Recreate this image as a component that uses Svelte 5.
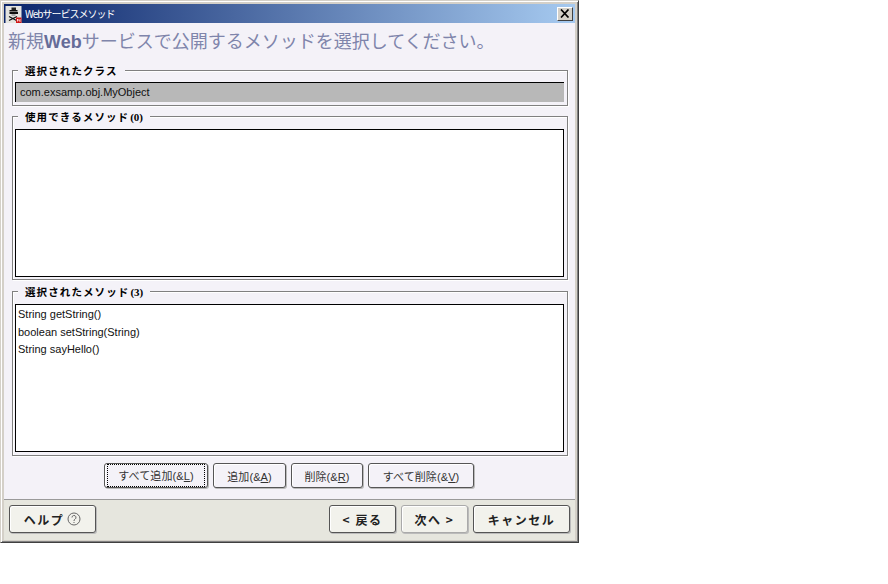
<script>
  const methods = ['String getString()', 'boolean setString(String)', 'String sayHello()'];
</script>

<div class="win">
  <div class="titlebar">
    <svg class="ico" width="17" height="17" viewBox="0 0 16 17">
      <rect width="16" height="17" fill="#e4e4e0"/>
      <path d="M4 4h8v1.500H4z" fill="#111"/><path d="M6 1.500h4.500V4H6z" fill="#222"/>
      <path d="M4 6h8.500v2H4z" fill="#111"/><path d="M6 8h4v2H6z" fill="#aaa"/>
      <path d="M3.500 10.500l7.500 4M11.500 10.500l-8 4" stroke="#111" stroke-width="1.300"/>
      <rect x="10.500" y="11.500" width="5.500" height="5.500" fill="#d01818"/>
      <path d="M12 13v2.500M14.500 13v2.500M12 13l2.500 2.500" stroke="#fff" stroke-width=".8" fill="none"/>
    </svg>
    <span class="wintitle">Webサービスメソッド</span>
    <span class="close"><svg width="10" height="9" viewBox="0 0 10 9"><path d="M1 0.500l7.500 8M8.500 0.500l-7.500 8" stroke="#000" stroke-width="1.700"/></svg></span>
  </div>

  <div class="content">
    <h1>新規<b>Web</b>サービスで公開するメソッドを選択してください。</h1>

    <fieldset class="g1">
      <legend>選択されたクラス</legend>
      <div class="cls">com.exsamp.obj.MyObject</div>
    </fieldset>

    <fieldset class="g2">
      <legend>使用できるメソッド<span class="n">(0)</span></legend>
      <div class="list"></div>
    </fieldset>

    <fieldset class="g3">
      <legend>選択されたメソッド<span class="n">(3)</span></legend>
      <div class="list">
        {#each methods as m}<div class="item">{m}</div>{/each}
      </div>
    </fieldset>

    <div class="actions">
      <button class="sm focus w1"><span>すべて追加(&amp;<u>L</u>)</span></button>
      <button class="sm w2"><span>追加(&amp;<u>A</u>)</span></button>
      <button class="sm w3"><span>削除(&amp;<u>R</u>)</span></button>
      <button class="sm w4"><span>すべて削除(&amp;<u>V</u>)</span></button>
    </div>
  </div>

  <div class="footer">
    <button class="lg help">ヘルプ
      <svg width="14" height="14" viewBox="0 0 14 14"><circle cx="7" cy="7" r="6" fill="none" stroke="#666"/><path d="M5 5.500a2 2 0 1 1 3 1.700c-.8.500-1 .9-1 1.800M7 10v1" fill="none" stroke="#666"/></svg>
    </button>
    <span class="grow"></span>
    <button class="lg nav">&lt; 戻る</button>
    <button class="lg nav next">次へ &gt;</button>
    <button class="lg cancel">キャンセル</button>
  </div>
</div>

<style>
  :global(body) { margin: 0; background: #fff; }
  .win {
    box-sizing: border-box; width: 579px; height: 543px;
    background: #d4d0c8;
    border-top: 1px solid #d4d0c8; border-left: 1px solid #d4d0c8;
    border-right: 1px solid #404040; border-bottom: 1px solid #404040;
    box-shadow: inset 1px 1px #fff, inset -1px -1px #808080;
    padding: 3px 3px 2px 3px;
    display: flex; flex-direction: column;
    font-family: "Liberation Sans", "Noto Sans CJK JP", sans-serif;
  }
  .titlebar {
    height: 19px; flex: none; display: flex; align-items: center; gap: 3px; padding: 0 2px 0 1px;
    background: linear-gradient(90deg, #0a246a, #a6caf0); color: #fff; box-sizing: border-box;
  }
  .ico { flex: none; margin-top: 1px; }
  .wintitle { font: 10px/19px "Noto Sans CJK JP", sans-serif; flex: 1; letter-spacing: -1px; }
  .close {
    box-sizing: border-box; width: 16px; height: 14px; background: #d4d0c8;
    border: 1px solid; border-color: #fff #404040 #404040 #fff;
    display: flex; align-items: center; justify-content: center;
  }
  .content {
    flex: 1; background: #f4f2f8; padding: 0 7px 0 8px; display: flex; flex-direction: column; min-height: 0;
  }
  h1 {
    margin: 0 0 0 -4px; height: 46px; padding: 4px 0 0 0; box-sizing: border-box;
    font: 400 18px/26px "Noto Sans CJK JP", sans-serif; color: #7f85ab; white-space: nowrap;
  }
  h1 b { font-family: "Liberation Sans", sans-serif; font-weight: 700; color: #666c98; }
  fieldset {
    margin: 0; padding: 5px 3px 3px 2px; min-width: 0; box-sizing: border-box;
    border: 1px solid #808080; box-shadow: inset 1px 1px #fff, 1px 1px #fff;
    display: block;
  }
  legend {
    margin-left: 3px; padding: 1px 7px 0; background: #f4f2f8; color: #000; height: 12px;
    font: 700 10.500px/12px "Noto Sans CJK JP", sans-serif; letter-spacing: 1.1px;
  }
  .n { font-family: "Liberation Serif", serif; font-size: 11px; letter-spacing: 0; margin-left: 1px; }
  .g1 { height: 42px; margin-bottom: 4px; margin-top: -5px; }
  .g2 { height: 170px; margin-bottom: 5px; padding-top: 6px; }
  .g3 { height: 171px; padding-top: 6px; }
  .cls {
    height: 20px; box-sizing: border-box; background: #b8b8b8; border-top: 1px solid #000; border-left: 1px solid #000;
    font-size: 11px; line-height: 18px; padding-left: 4px; color: #111;
  }
  .list {
    box-sizing: border-box; background: #fff; border: 1px solid #000;
    height: 148px; padding: 1px 2px; font-size: 11px; color: #111;
  }
  .item { height: 17.500px; line-height: 17.500px; }
  .actions { display: flex; gap: 5px; justify-content: center; margin-top: 7px; padding-right: 2px; }
  button {
    box-sizing: border-box; background: #f4f2f8; border: 1px solid #555; border-radius: 3px;
    padding: 0; color: #333; box-shadow: 1px 1px #bbb, inset 1px 1px #fff;
    font-family: "Liberation Sans", "Noto Sans CJK JP", sans-serif; white-space: nowrap;
    display: inline-flex; align-items: center; justify-content: center;
  }
  .sm { height: 25px; font-size: 11px; letter-spacing: 0.1px; }
  .w1 { width: 104px; } .w2 { width: 73px; } .w3 { width: 72px; } .w4 { width: 106px; }
  .focus span { outline: 1px dotted #000; padding: 4px 9px 2px; width: 96px; box-sizing: border-box; display: block; line-height: 15px; }
  u { text-decoration: underline; }
  .footer {
    flex: none; height: 41px; background: #e6e6de; border-top: 1px solid #9a9a9a; box-sizing: border-box;
    display: flex; align-items: center; gap: 5px; padding: 0 5px 2px 5px;
  }
  .grow { flex: 1; }
  .lg { height: 28px; font-weight: 700; font-size: 12px; letter-spacing: 1.5px; color: #222; background: #f2f2ec; font-family: "Noto Sans CJK JP", sans-serif; }
  .help { width: 87px; gap: 3px; }
  .nav { width: 67px; }
  .next { border-color: #aaa; }
  .cancel { width: 97px; }
</style>
